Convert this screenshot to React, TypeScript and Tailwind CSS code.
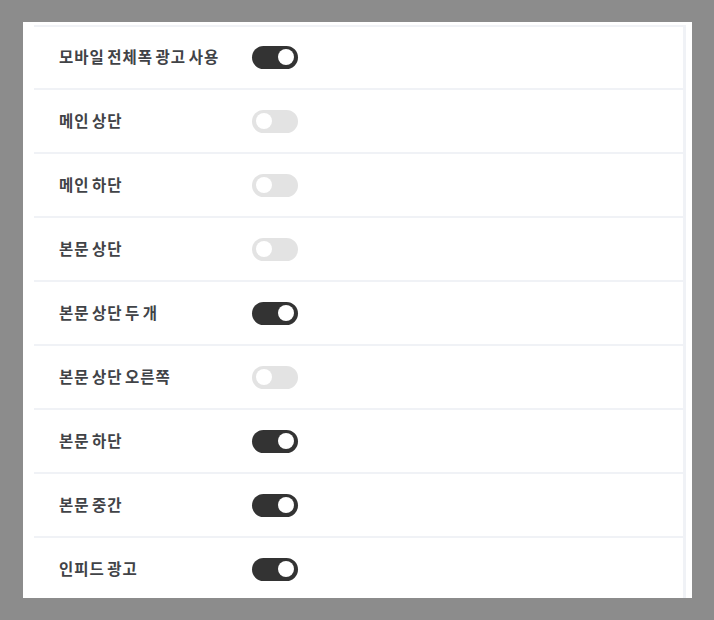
import React, { useState } from 'react';

const items = [
  { label: '모바일 전체폭 광고 사용', on: true },
  { label: '메인 상단', on: false },
  { label: '메인 하단', on: false },
  { label: '본문 상단', on: false },
  { label: '본문 상단 두 개', on: true },
  { label: '본문 상단 오른쪽', on: false },
  { label: '본문 하단', on: true },
  { label: '본문 중간', on: true },
  { label: '인피드 광고', on: true },
];

const Toggle = ({ on, onClick }: { on: boolean; onClick: () => void }) => (
  <button
    onClick={onClick}
    className={`relative w-[46px] h-[23px] rounded-full ${on ? 'bg-[#333333]' : 'bg-[#e3e3e3]'}`}
  >
    <span
      className={`absolute top-[3.5px] w-[16px] h-[16px] rounded-full bg-white ${on ? 'right-[4px]' : 'left-[4px]'}`}
    />
  </button>
);

export default function App() {
  const [state, setState] = useState(items.map((i) => i.on));

  return (
    <div className="w-[714px] h-[620px] bg-[#8c8c8c] pt-[22px] pl-[23px] font-['Noto_Sans_CJK_KR','Noto_Sans',sans-serif]">
      <div className="w-[669px] h-[576px] bg-white overflow-hidden pt-[3px] pl-[11px] pr-[6px]">
        <div className="border-t-2 border-r-[3px] border-[#f0f2f6] h-[600px]">
          {items.map((item, i) => (
            <div key={item.label} className="flex items-center h-[64px] border-b-2 border-[#f0f2f6] pl-[25px] first:h-[63px] first:pb-[1px]">
              <span className="w-[193px] text-[15.5px] font-bold text-[#414347] tracking-[1px] [word-spacing:-2px]">{item.label}</span>
              <Toggle
                on={state[i]}
                onClick={() => setState((s) => s.map((v, j) => (j === i ? !v : v)))}
              />
            </div>
          ))}
        </div>
      </div>
    </div>
  );
}
